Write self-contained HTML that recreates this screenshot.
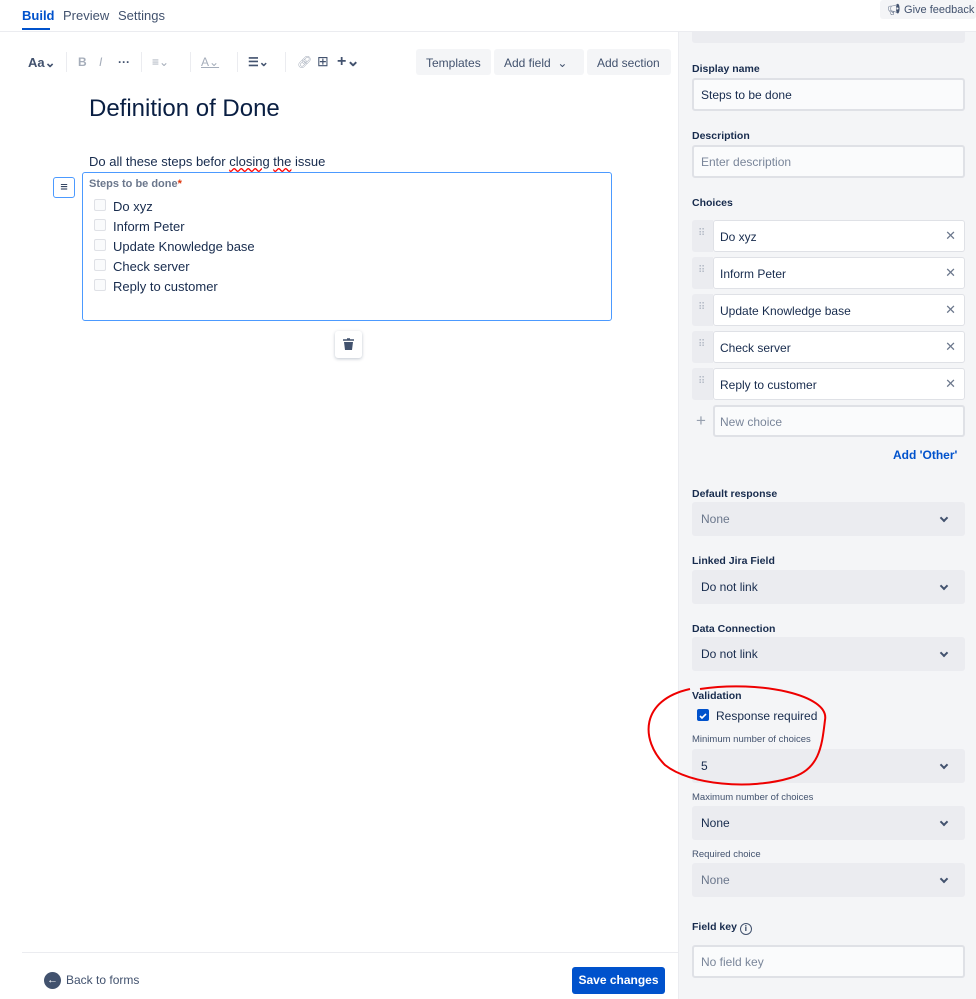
<!DOCTYPE html>
<html><head><meta charset="utf-8"><style>
*{box-sizing:border-box;margin:0;padding:0}
body{width:976px;height:999px;position:relative;overflow:hidden;background:#fff;font-family:"Liberation Sans",sans-serif;color:#172b4d}
.a{position:absolute}
.tab{font-size:13px;top:8px;color:#42526e}
.lbl{position:absolute;left:692px;font-size:10.5px;font-weight:bold;color:#172b4d}
.sl{position:absolute;left:692px;font-size:9.5px;color:#42526e}
.inp{position:absolute;left:692px;width:273px;height:33px;background:#fafbfc;border:2px solid #dfe1e6;border-radius:3px;font-size:12px;padding:8px 7px;color:#172b4d}
.sel{position:absolute;left:692px;width:273px;height:34px;background:#ebecf0;border-radius:3px;font-size:12px;padding:10px 9px;color:#172b4d}
.sel:after{content:"";position:absolute;right:18px;top:13px;width:4px;height:4px;border-right:2px solid #42526e;border-bottom:2px solid #42526e;transform:rotate(45deg)}
.ch{position:absolute;left:692px;width:273px;height:32px}
.ch .h{position:absolute;left:0;top:0;width:21px;height:32px;background:#ebecf0;border-radius:3px 0 0 3px}
.ch .h:after{content:"⠿";position:absolute;left:6px;top:8px;font-size:10px;color:#b3bac5}
.ch .b{position:absolute;left:21px;top:0;right:0;height:32px;background:#fff;border:1.5px solid #dfe1e6;border-radius:3px;font-size:12px;padding:9px 6px}
.ch .x{position:absolute;right:8px;top:7px;font-size:13px;color:#6b778c}
.cb{position:absolute;left:94px;width:12px;height:12px;border:1.5px solid #dfe1e6;border-radius:2px;background:#fafbfc}
.it{position:absolute;left:113px;font-size:13px;color:#172b4d}
.btn{position:absolute;top:49px;height:26px;background:#f4f5f7;border-radius:3px;font-size:12px;color:#42526e;padding:7px 10px}
.tb{position:absolute;top:55px;font-size:12px;color:#a5adba}
</style></head><body>
<div class="a tab" style="left:22px;color:#0052cc;font-weight:bold">Build</div>
<div class="a" style="left:22px;top:28px;width:28px;height:2px;background:#0052cc"></div>
<div class="a tab" style="left:63px">Preview</div>
<div class="a tab" style="left:118px">Settings</div>
<div class="a" style="left:0;top:31px;width:976px;height:1px;background:#ebecf0"></div>
<div class="a" style="left:880px;top:0;width:96px;height:19px;background:#f4f5f7;border-radius:3px;font-size:11px;color:#42526e;padding:3px 0 0 7px">&#x1F4E2;&#xFE0E; Give feedback</div>

<div class="a" style="left:28px;top:55px;font-size:13px;font-weight:bold;color:#42526e">Aa&#x2304;</div>
<div class="a" style="left:66px;top:52px;width:1px;height:20px;background:#ebecf0"></div>
<div class="tb" style="left:78px;font-weight:bold">B</div>
<div class="tb" style="left:99px;font-style:italic">I</div>
<div class="tb" style="left:118px;color:#42526e;font-weight:bold">···</div>
<div class="a" style="left:141px;top:52px;width:1px;height:20px;background:#ebecf0"></div>
<div class="tb" style="left:152px">&#x2261;&#x2304;</div>
<div class="a" style="left:190px;top:52px;width:1px;height:20px;background:#ebecf0"></div>
<div class="tb" style="left:201px;text-decoration:underline">A&#x2304;</div>
<div class="a" style="left:237px;top:52px;width:1px;height:20px;background:#ebecf0"></div>
<div class="tb" style="left:248px;color:#42526e;font-weight:bold">&#x2630;&#x2304;</div>
<div class="a" style="left:285px;top:52px;width:1px;height:20px;background:#ebecf0"></div>
<div class="tb" style="left:297px">&#x1F517;&#xFE0E;</div>
<div class="tb" style="left:317px;color:#42526e;font-size:14px;top:53px">&#x229E;</div>
<div class="tb" style="left:337px;color:#42526e;font-size:16px;top:51px;font-weight:bold">+&#x2304;</div>
<div class="btn" style="left:416px;width:75px">Templates</div>
<div class="btn" style="left:494px;width:90px">Add field &nbsp;&#x2304;</div>
<div class="btn" style="left:587px;width:84px">Add section</div>

<div class="a" style="left:89px;top:95px;font-size:24px;color:#091e42">Definition of Done</div>
<div class="a" style="left:89px;top:154px;font-size:13px">Do all these steps befor <span style="text-decoration:underline wavy red">closing</span> <span style="text-decoration:underline wavy red">the</span> issue</div>

<div class="a" style="left:53px;top:177px;width:22px;height:21px;border:1.5px solid #4c9aff;border-radius:3px;background:#fff;font-size:13px;font-weight:bold;text-align:center;line-height:17px">&#x2261;</div>
<div class="a" style="left:82px;top:172px;width:530px;height:149px;border:1.5px solid #4c9aff;border-radius:3px"></div>
<div class="a" style="left:89px;top:178px;font-size:11px;font-weight:bold;color:#6b778c">Steps to be done<span style="color:#de350b">*</span></div>
<div class="cb" style="top:199px"></div><div class="it" style="top:199px">Do xyz</div>
<div class="cb" style="top:219px"></div><div class="it" style="top:219px">Inform Peter</div>
<div class="cb" style="top:239px"></div><div class="it" style="top:239px">Update Knowledge base</div>
<div class="cb" style="top:259px"></div><div class="it" style="top:259px">Check server</div>
<div class="cb" style="top:279px"></div><div class="it" style="top:279px">Reply to customer</div>
<div class="a" style="left:335px;top:331px;width:27px;height:27px;background:#fff;border-radius:3px;box-shadow:0 1px 3px rgba(9,30,66,.25)">
<svg width="27" height="27"><path d="M8 9h11M12 8h3" stroke="#42526e" stroke-width="1.6"/><path d="M9 11h9l-1 8h-7z" fill="#42526e"/></svg></div>

<div class="a" style="left:22px;top:952px;width:656px;height:1px;background:#ebecf0"></div>
<div class="a" style="left:44px;top:972px;width:17px;height:17px;border-radius:50%;background:#42526e;color:#fff;font-size:11px;text-align:center;line-height:17px;font-weight:bold">&#x2190;</div>
<div class="a" style="left:66px;top:973px;font-size:12px;color:#42526e">Back to forms</div>
<div class="a" style="left:572px;top:967px;width:93px;height:27px;background:#0052cc;border-radius:3px;color:#fff;font-size:12px;font-weight:bold;text-align:center;line-height:27px">Save changes</div>

<div class="a" style="left:678px;top:32px;width:298px;height:967px;background:#f4f5f7;border-left:1px solid #ebecf0"></div>
<div class="a" style="left:692px;top:32px;width:273px;height:11px;background:#ebecf0;border-radius:0 0 3px 3px"></div>
<div class="lbl" style="top:63px">Display name</div>
<div class="inp" style="top:78px">Steps to be done</div>
<div class="lbl" style="top:130px">Description</div>
<div class="inp" style="top:145px;color:#7a869a">Enter description</div>
<div class="lbl" style="top:197px">Choices</div>
<div class="ch" style="top:220px"><div class="h"></div><div class="b">Do xyz<span class="x">&#x2715;</span></div></div>
<div class="ch" style="top:257px"><div class="h"></div><div class="b">Inform Peter<span class="x">&#x2715;</span></div></div>
<div class="ch" style="top:294px"><div class="h"></div><div class="b">Update Knowledge base<span class="x">&#x2715;</span></div></div>
<div class="ch" style="top:331px"><div class="h"></div><div class="b">Check server<span class="x">&#x2715;</span></div></div>
<div class="ch" style="top:368px"><div class="h"></div><div class="b">Reply to customer<span class="x">&#x2715;</span></div></div>
<div class="a" style="left:696px;top:411px;font-size:17px;color:#97a0af">+</div>
<div class="a" style="left:713px;top:405px;width:252px;height:32px;background:#fafbfc;border:2px solid #dfe1e6;border-radius:3px;font-size:12px;padding:8px 5px;color:#7a869a">New choice</div>
<div class="a" style="left:893px;top:448px;font-size:12px;font-weight:bold;color:#0052cc">Add 'Other'</div>
<div class="lbl" style="top:488px">Default response</div>
<div class="sel" style="top:502px;color:#6b778c">None</div>
<div class="lbl" style="top:555px">Linked Jira Field</div>
<div class="sel" style="top:570px">Do not link</div>
<div class="lbl" style="top:623px">Data Connection</div>
<div class="sel" style="top:637px">Do not link</div>
<div class="lbl" style="top:690px">Validation</div>
<div class="a" style="left:697px;top:709px;width:12px;height:12px;background:#0052cc;border-radius:2px"><svg width="12" height="12"><path d="M3 6l2 2 4-4" stroke="#fff" stroke-width="1.6" fill="none"/></svg></div>
<div class="a" style="left:716px;top:709px;font-size:12px">Response required</div>
<div class="sl" style="top:734px">Minimum number of choices</div>
<div class="sel" style="top:749px">5</div>
<div class="sl" style="top:792px">Maximum number of choices</div>
<div class="sel" style="top:806px">None</div>
<div class="sl" style="top:849px">Required choice</div>
<div class="sel" style="top:863px;color:#6b778c">None</div>
<div class="lbl" style="top:921px">Field key <span style="display:inline-block;width:12px;height:12px;border:1.5px solid #42526e;border-radius:50%;font-size:8px;text-align:center;line-height:9px;vertical-align:-1px">i</span></div>
<div class="inp" style="top:945px;color:#7a869a">No field key</div>

<svg class="a" style="left:0;top:0" width="976" height="999"><path d="M700 689 C760 680 830 695 825 720 C822 745 820 770 790 778 C750 790 690 785 665 765 C640 740 640 700 690 689" fill="none" stroke="#e00" stroke-width="2"/></svg>
</body></html>
